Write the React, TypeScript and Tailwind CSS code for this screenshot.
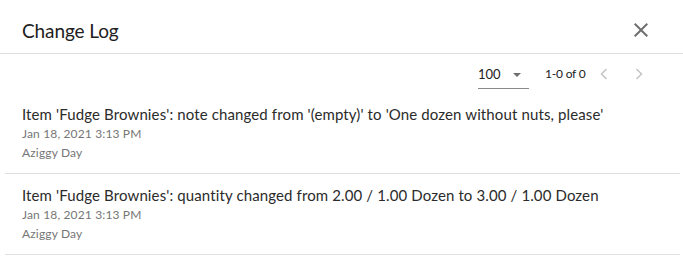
const entries = [
  {
    text: "Item 'Fudge Brownies': note changed from '(empty)' to 'One dozen without nuts, please'",
    date: "Jan 18, 2021 3:13 PM",
    user: "Aziggy Day",
  },
  {
    text: "Item 'Fudge Brownies': quantity changed from 2.00 / 1.00 Dozen to 3.00 / 1.00 Dozen",
    date: "Jan 18, 2021 3:13 PM",
    user: "Aziggy Day",
  },
]

const CloseIcon = () => (
  <svg width="24" height="24" viewBox="0 0 24 24" fill="#6f6f6f">
    <path d="M19 6.41 17.59 5 12 10.59 6.41 5 5 6.41 10.59 12 5 17.59 6.41 19 12 13.41 17.59 19 19 17.59 13.41 12z" />
  </svg>
)

const Chevron = ({ dir }: { dir: "left" | "right" }) => (
  <svg width="10" height="12" viewBox="0 0 10 12" fill="none" stroke="#c4c4c4" strokeWidth="1.5">
    <path d={dir === "left" ? "M7.5 1 2.5 6l5 5" : "M2.5 1l5 5-5 5"} />
  </svg>
)

export default function App() {
  return (
    <div className="w-[683px] h-[260px] bg-white overflow-hidden font-['Lato','Roboto',sans-serif]">
      <div className="flex items-center justify-between h-[54px] pt-[7px] border-b border-[#e0e0e0] pl-[22px] pr-[30px]">
        <h2 className="mt-[3px] text-[19px] tracking-[-0.1px] text-[#212121]">Change Log</h2>
        <button type="button" className="w-6 h-6 flex items-center justify-center">
          <CloseIcon />
        </button>
      </div>

      <div className="flex items-center h-[39px] pl-[478px] text-[12px] text-[#212121]">
        <div className="flex items-center w-[51px] h-[26px] mt-[4px] border-b border-[#8a8a8a]">
          <span className="w-[35px] text-[13px]">100</span>
          <svg width="8" height="4" viewBox="0 0 8 4" fill="#6f6f6f">
            <path d="M0 0h8L4 4z" />
          </svg>
        </div>
        <span className="ml-[16px] tracking-[-0.2px]">1-0 of 0</span>
        <div className="flex items-center gap-[25px] ml-[13px]">
          <Chevron dir="left" />
          <Chevron dir="right" />
        </div>
      </div>

      <div className="ml-[5px] mr-[3px]">
        {entries.map((e, i) => (
          <div key={i} className="pl-[17px] pt-[11px] pb-[11px] border-b border-[#e0e0e0]">
            <div className="text-[15px] leading-[20px] tracking-[0.12px] text-[#2b2b2b]">{e.text}</div>
            <div className="text-[12px] leading-[19px] tracking-[0.15px] text-[#767676]">{e.date}</div>
            <div className="text-[12px] leading-[19px] tracking-[0.15px] text-[#767676]">{e.user}</div>
          </div>
        ))}
      </div>
    </div>
  )
}
